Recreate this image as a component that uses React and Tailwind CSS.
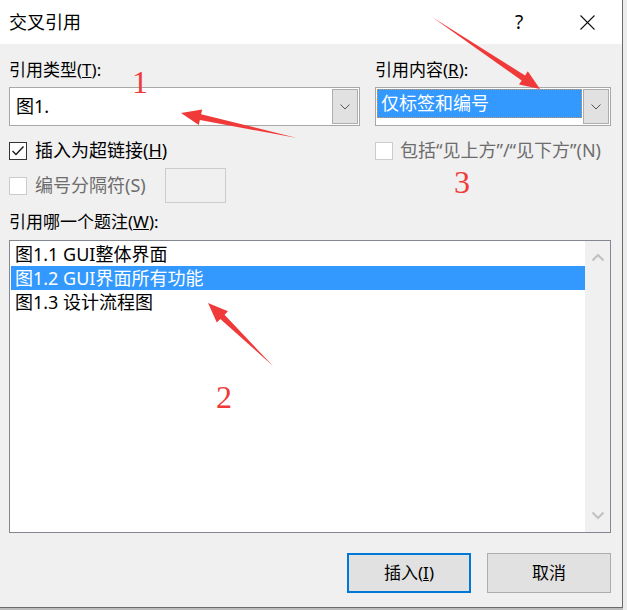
import React from "react";

const font = "font-['Noto_Sans','Noto_Sans_CJK_SC',sans-serif]";

function Check({ checked, disabled }) {
  return (
    <span
      className={`w-[18px] h-[18px] shrink-0 bg-white border flex items-center justify-center ${
        disabled ? "border-[#cccccc]" : "border-[#333333]"
      }`}
    >
      {checked && (
        <svg width="14" height="14" viewBox="0 0 14 14">
          <polyline points="1.5,7 5,10.5 12.5,2.5" fill="none" stroke="#1a1a1a" strokeWidth="1.4" />
        </svg>
      )}
    </span>
  );
}

function DropButton() {
  return (
    <span className="w-[26px] self-stretch shrink-0 bg-[#e1e1e1] border border-[#adadad] flex items-center justify-center">
      <svg width="10" height="6" viewBox="0 0 10 6">
        <polyline points="0.5,0.5 5,5 9.5,0.5" fill="none" stroke="#555" strokeWidth="1" />
      </svg>
    </span>
  );
}

function Chevron({ down }) {
  return (
    <svg width="14" height="9" viewBox="0 0 14 9">
      <polyline
        points={down ? "1.5,1.5 7,7 12.5,1.5" : "1.5,7.5 7,2 12.5,7.5"}
        fill="none"
        stroke="#c2c2c2"
        strokeWidth="2.2"
      />
    </svg>
  );
}

const items = ["图1.1 GUI整体界面", "图1.2 GUI界面所有功能", "图1.3 设计流程图"];

export default function App() {
  return (
    <div className={`relative w-[627px] h-[610px] flex bg-[#bcbcbc] overflow-hidden text-black ${font}`}>
      <div className="w-[623px] h-[608px] shrink-0 flex flex-col bg-[#f0f0f0] border-r border-b border-[#6b6b6b]">
        {/* title bar */}
        <div className="h-[44px] shrink-0 bg-white flex items-center">
          <span className="pl-[9px] text-[18px] leading-none">交叉引用</span>
          <div className="ml-auto flex items-center h-full">
            <span className="w-[66px] text-center text-[19px] leading-none">?</span>
            <span className="w-[70px] flex justify-center">
              <svg width="15" height="15" viewBox="0 0 15 15">
                <path d="M0.5 0.5 L14.5 14.5 M14.5 0.5 L0.5 14.5" stroke="#111" strokeWidth="1.1" />
              </svg>
            </span>
          </div>
        </div>

        {/* body */}
        <div className="flex-1 flex flex-col pl-[9px] pr-[11px] pt-[16px] text-[18px]">
          <div className="grid grid-cols-[351px_236px] gap-x-[15px]">
            <div className="flex flex-col">
              <div className="h-[20px] leading-[20px] text-[17px]">
                引用类型(<span className="underline">T</span>):
              </div>
              <div className="mt-[7px] h-[39px] bg-white border border-[#a8a8a8] flex p-[1px]">
                <span className="flex-1 flex items-center pl-[5px]">图1.</span>
                <DropButton />
              </div>
            </div>
            <div className="flex flex-col">
              <div className="h-[20px] leading-[20px] text-[17px]">
                引用内容(<span className="underline">R</span>):
              </div>
              <div className="mt-[7px] h-[39px] bg-white border border-[#a8a8a8] flex p-[1px] gap-[1px]">
                <span className="flex-1 self-start h-[29px] bg-[#3399ff] border border-dotted border-[#d9965b] text-white flex items-center pl-[3px]">
                  仅标签和编号
                </span>
                <DropButton />
              </div>
            </div>
          </div>

          <div className="mt-[11px] grid grid-cols-[351px_236px] gap-x-[15px] h-[20px]">
            <div className="flex items-center gap-[8px]">
              <Check checked />
              <span>
                插入为超链接(<span className="underline">H</span>)
              </span>
            </div>
            <div className="flex items-center gap-[7px] text-[#6d6d6d]">
              <Check disabled />
              <span>包括“见上方”/“见下方”(N)</span>
            </div>
          </div>

          <div className="mt-[11px] h-[35px] flex items-center">
            <Check disabled />
            <span className="ml-[8px] text-[#6d6d6d]">编号分隔符(S)</span>
            <span className="ml-[19px] w-[61px] h-[35px] bg-[#f0f0f0] border border-[#cccccc]" />
          </div>

          <div className="mt-[9px] h-[20px] leading-[20px] text-[17px]">
            引用哪一个题注(<span className="underline">W</span>):
          </div>

          <div className="mt-[8px] h-[293px] bg-white border border-[#828790] flex">
            <div className="flex-1 flex flex-col pl-[1px] pt-[1px]">
              {items.map((t, i) => (
                <div
                  key={i}
                  className={`h-[24px] flex items-center pl-[4px] ${i === 1 ? "bg-[#3399ff] text-white" : ""}`}
                >
                  {t}
                </div>
              ))}
            </div>
            <div className="w-[25px] bg-[#f0f0f0] flex flex-col items-center justify-between py-[12px]">
              <Chevron />
              <Chevron down />
            </div>
          </div>

          <div className="mt-[20px] flex justify-end gap-[16px]">
            <button className="w-[124px] h-[40px] bg-[#e1e1e1] border-2 border-[#0078d7] text-[17px]">
              插入(<span className="underline">I</span>)
            </button>
            <button className="w-[124px] h-[40px] bg-[#e1e1e1] border border-[#adadad] text-[17px]">
              取消
            </button>
          </div>
        </div>
      </div>
      <div className="flex-1 bg-[#ececec]" />

      {/* red annotations */}
      <svg className="absolute inset-0 pointer-events-none" width="627" height="610">
        <g fill="#f03a3a">
          <polygon points="181,113 202.2,109.4 201.1,114.3 297,138 199.9,120.1 198.8,125" />
          <polygon points="208,303 228,311.2 224.5,314.7 273,366 220.3,319.1 216.8,322.6" />
          <polygon points="540,89 519,84.6 521.7,80.4 432,17 525.1,75.4 527.8,71.2" />
          <text x="132" y="93" fontFamily="'Liberation Serif', serif" fontSize="32">1</text>
          <text x="216" y="408" fontFamily="'Liberation Serif', serif" fontSize="32">2</text>
          <text x="454" y="193" fontFamily="'Liberation Serif', serif" fontSize="32">3</text>
        </g>
      </svg>
    </div>
  );
}
